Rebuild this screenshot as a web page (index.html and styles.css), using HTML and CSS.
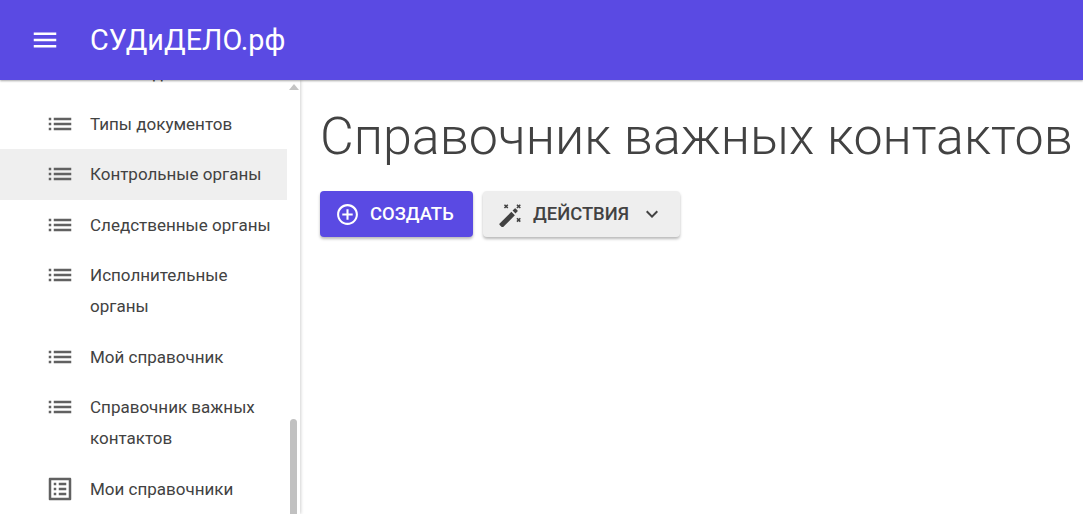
FILE: index.html
```html
<!DOCTYPE html>
<html lang="ru">
<head>
<meta charset="utf-8">
<title>СУДиДЕЛО.рф</title>
<link rel="stylesheet" href="styles.css">
</head>
<body>
<header class="topbar">
  <svg class="menu-icon" viewBox="0 0 24 24"><path d="M3 18h18v-2H3v2zm0-5h18v-2H3v2zm0-7v2h18V6H3z"/></svg>
  <span class="brand">СУДиДЕЛО.рф</span>
</header>
<div class="body">
  <aside class="sidebar">
    <ul class="nav">
      <li class="nav-item"><svg class="nav-icon" viewBox="0 0 24 24"><use href="#list"/></svg><span>Списки дел</span></li>
      <li class="nav-item"><svg class="nav-icon" viewBox="0 0 24 24"><use href="#list"/></svg><span>Типы документов</span></li>
      <li class="nav-item active"><svg class="nav-icon" viewBox="0 0 24 24"><use href="#list"/></svg><span>Контрольные органы</span></li>
      <li class="nav-item"><svg class="nav-icon" viewBox="0 0 24 24"><use href="#list"/></svg><span>Следственные органы</span></li>
      <li class="nav-item"><svg class="nav-icon" viewBox="0 0 24 24"><use href="#list"/></svg><span>Исполнительные органы</span></li>
      <li class="nav-item"><svg class="nav-icon" viewBox="0 0 24 24"><use href="#list"/></svg><span>Мой справочник</span></li>
      <li class="nav-item"><svg class="nav-icon" viewBox="0 0 24 24"><use href="#list"/></svg><span>Справочник важных контактов</span></li>
      <li class="nav-item"><svg class="nav-icon" viewBox="0 0 24 24"><path d="M19 5v14H5V5h14m1.1-2H3.9c-.5 0-.9.4-.9.9v16.2c0 .4.4.9.9.9h16.2c.4 0 .9-.5.9-.9V3.9c0-.5-.5-.9-.9-.9zM11 7h6v2h-6V7zm0 4h6v2h-6v-2zm0 4h6v2h-6zM7 7h2v2H7zm0 4h2v2H7zm0 4h2v2H7z"/></svg><span>Мои справочники</span></li>
    </ul>
    <div class="scrollbar">
      <span class="scroll-arrow"></span>
      <span class="scroll-thumb"></span>
    </div>
  </aside>
  <main class="content">
    <h1 class="title">Справочник важных контактов</h1>
    <div class="actions">
      <button class="btn btn-primary">
        <svg class="btn-icon" viewBox="0 0 24 24"><path d="M13 7h-2v4H7v2h4v4h2v-4h4v-2h-4V7zm-1-5C6.48 2 2 6.48 2 12s4.48 10 10 10 10-4.48 10-10S17.52 2 12 2zm0 18c-4.41 0-8-3.59-8-8s3.59-8 8-8 8 3.59 8 8-3.59 8-8 8z"/></svg>
        <span class="btn-label">Создать</span>
      </button>
      <button class="btn btn-secondary">
        <svg class="btn-icon wand" viewBox="0 0 24 24"><path d="M1.6 20.6 12.8 9.4l3.4 3.4L5 24a1 1 0 0 1-1.4 0l-2-2a1 1 0 0 1 0-1.4z"/><path d="M14 8.2l1.8-1.8a1 1 0 0 1 1.4 0l1.4 1.4a1 1 0 0 1 0 1.4L16.8 11z"/><path class="wand-stars" d="M6.2 2.6l3.2 3.2M9.4 2.6 6.2 5.8M18.2 2.6l3.2 3.2M21.4 2.6l-3.2 3.2M18.2 15.6l3.2 3.2M21.4 15.6l-3.2 3.2"/></svg>
        <span class="btn-label">Действия</span>
        <svg class="chevron" viewBox="0 0 24 24"><path d="M7.41 8.59 12 13.17l4.59-4.58L18 10l-6 6-6-6z"/></svg>
      </button>
    </div>
  </main>
</div>
<svg class="defs" width="0" height="0"><defs><symbol id="list" viewBox="0 0 24 24"><path d="M3 13h2v-2H3v2zm0 4h2v-2H3v2zm0-8h2V7H3v2zm4 4h14v-2H7v2zm0 4h14v-2H7v2zM7 7v2h14V7H7z"/></symbol></defs></svg>
</body>
</html>
```
FILE: styles.css
```css
* { box-sizing: border-box; }
html, body { margin: 0; height: 100%; overflow: hidden; }
body { font-family: Roboto, "Noto Sans", sans-serif; background: #fff; color: #424242; }

.topbar {
  position: relative;
  z-index: 2;
  height: 80px;
  display: flex;
  align-items: center;
  padding-left: 30px;
  background: #5a4ae3;
  color: #fff;
  box-shadow: 0 1px 2px rgba(0,0,0,.35);
}
.menu-icon { width: 30px; height: 30px; fill: #fff; }
.brand { margin-left: 30px; font-size: 28.8px; line-height: 36px; }

.body { display: flex; height: 434px; }
.sidebar {
  position: relative;
  width: 300px;
  flex: none;
  overflow: hidden;
  background: #fff;
  box-shadow: 1px 0 3px rgba(0,0,0,.18);
}
.nav { list-style: none; margin: -31.6px 0 0; padding: 0; width: 287px; }
.nav-item {
  display: flex;
  align-items: flex-start;
  padding: 9.75px 15px 9.75px 45px;
  font-size: 17px;
  line-height: 31px;
  color: #424242;
}
.nav-item.active { background: #efefef; }
.nav-icon { flex: none; width: 30px; height: 30px; margin-right: 15px; fill: #616161; }

.scrollbar { position: absolute; top: 0; bottom: 0; right: 1px; width: 10px; }
.scroll-arrow {
  position: absolute; top: 4px; left: 0;
  border-left: 5px solid transparent;
  border-right: 5px solid transparent;
  border-bottom: 6px solid #c4c4c4;
}
.scroll-thumb {
  position: absolute; top: 339px; bottom: 0; left: 1px; width: 7px;
  background: #c1c1c1; border-radius: 4px 4px 0 0;
}

.content { flex: 1; min-width: 0; padding-left: 20px; }
.title {
  margin: 24px 0 0;
  font-size: 52px;
  line-height: 66px;
  font-weight: 300;
  color: #424242;
  white-space: nowrap;
}
.actions { display: flex; gap: 10px; margin-top: 21px; }
.btn {
  display: flex;
  align-items: center;
  height: 46px;
  border: 0;
  border-radius: 4px;
  font-family: inherit;
  font-size: 18.4px;
  font-weight: 500;
  text-transform: uppercase;
  box-shadow: 0 2px 3px rgba(0,0,0,.28);
}
.btn-primary { width: 153px; padding: 0 0 0 15px; background: #5a4ae3; color: #fff; }
.btn-secondary { width: 197px; padding: 0 0 0 15px; background: #eee; color: #424242; }
.btn-icon { width: 25px; height: 25px; margin-right: 10px; fill: currentColor; }
.wand-stars { fill: none; stroke: currentColor; stroke-width: 1.5; }
.btn-label { white-space: nowrap; margin-bottom: 2px; }
.chevron { width: 24px; height: 24px; margin-left: 11px; fill: currentColor; }
.defs { position: absolute; }
```
